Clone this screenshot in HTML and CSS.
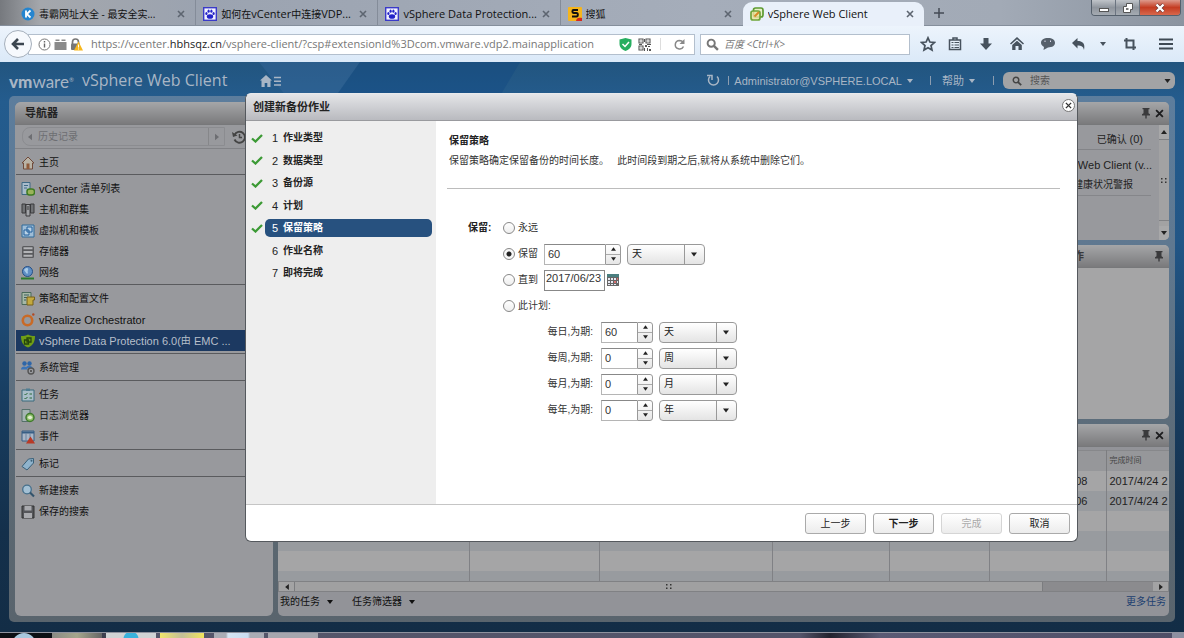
FILE: index.html
```html
<!DOCTYPE html>
<html lang="zh-CN">
<head>
<meta charset="utf-8">
<title>vSphere Web Client</title>
<link rel="stylesheet" href="styles.css">
</head>
<body>
<svg class="sprite" aria-hidden="true">
  <symbol id="x" viewBox="0 0 8 8"><path d="M1 1l6 6M7 1L1 7" stroke="currentColor" stroke-width="1.6" fill="none"/></symbol>
  <symbol id="down" viewBox="0 0 6 4"><path d="M0 0h6L3 4z" fill="currentColor"/></symbol>
  <symbol id="up" viewBox="0 0 6 4"><path d="M0 4h6L3 0z" fill="currentColor"/></symbol>
  <symbol id="left" viewBox="0 0 5 8"><path d="M5 0v8L0 4z" fill="currentColor"/></symbol>
  <symbol id="right" viewBox="0 0 5 8"><path d="M0 0v8l5-4z" fill="currentColor"/></symbol>
  <symbol id="grip" viewBox="0 0 6 5"><path d="M0 0h1.500v1.500H0zM4 0h1.500v1.500H4zM0 3.500h1.500V5H0zM4 3.500h1.500V5H4z" fill="#333"/></symbol>
  <symbol id="pin" viewBox="0 0 10 12"><path d="M1.500 1h7v1.300H7.500v4L9 7.200v1.300H5.700v3H4.300v-3H1V7.200l1.500-.9v-4h-1z" fill="currentColor"/></symbol>
  <symbol id="check" viewBox="0 0 12 9"><path d="M1 4.500l3.500 3L11 1" fill="none" stroke="#3c9a35" stroke-width="2.300"/></symbol>
  <symbol id="glass" viewBox="0 0 12 12"><circle cx="4.800" cy="4.800" r="3.300" fill="none" stroke="currentColor" stroke-width="1.800"/><path d="M7.300 7.300l3.700 3.700" stroke="currentColor" stroke-width="2.200"/></symbol>
  <symbol id="paw" viewBox="0 0 14 14"><rect x=".7" y=".7" width="12.600" height="12.600" fill="#f2f2ff" stroke="#3a3ac8" stroke-width="1.400"/><ellipse cx="7" cy="9.500" rx="3.200" ry="2.300" fill="#2323c8"/><ellipse cx="3.400" cy="6.500" rx="1.100" ry="1.500" fill="#2323c8"/><ellipse cx="5.600" cy="4.200" rx="1.100" ry="1.600" fill="#2323c8"/><ellipse cx="8.400" cy="4.200" rx="1.100" ry="1.600" fill="#2323c8"/><ellipse cx="10.600" cy="6.500" rx="1.100" ry="1.500" fill="#2323c8"/></symbol>
</svg>

<div class="tabstrip">
  <div class="tabs">
    <div class="tab"><svg class="fav" viewBox="0 0 14 14"><circle cx="7" cy="7" r="6.500" fill="#2585cf"/><path d="M5 3.500v7M9.500 3.500L5.800 7l3.700 3.500" stroke="#fff" stroke-width="1.800" fill="none"/></svg><span class="tab-title">毒霸网址大全 - 最安全实...</span><button class="tab-x" aria-label="关闭"><svg><use href="#x"/></svg></button></div>
    <div class="tab"><svg class="fav"><use href="#paw"/></svg><span class="tab-title">如何在<span class="la">vCenter</span>中连接<span class="la">VDP...</span></span><button class="tab-x" aria-label="关闭"><svg><use href="#x"/></svg></button></div>
    <div class="tab"><svg class="fav"><use href="#paw"/></svg><span class="tab-title la">vSphere Data Protection...</span><button class="tab-x" aria-label="关闭"><svg><use href="#x"/></svg></button></div>
    <div class="tab plain"><svg class="fav" viewBox="0 0 14 14"><rect width="14" height="14" rx="1" fill="#f6b51c"/><path d="M10 3H5.500C4 3 4 6 5.500 6h3c1.800 0 1.800 3.500 0 3.500H4" stroke="#111" stroke-width="1.900" fill="none"/><path d="M8 14c0-3 3-4 6-3v3z" fill="#d5281c"/></svg><span class="tab-title">搜狐</span><button class="tab-x" aria-label="关闭"><svg><use href="#x"/></svg></button></div>
    <div class="tab active"><svg class="fav" viewBox="0 0 14 14"><rect x="3.500" y="1" width="9.500" height="9" rx="2" fill="#e8f0c8" stroke="#5c9a30" stroke-width="1.700"/><rect x="1" y="4" width="9" height="9" rx="2" fill="#efe2a0" fill-opacity=".8" stroke="#6fa53a" stroke-width="1.700"/><path d="M4.500 9.500L9 5" stroke="#d78a28" stroke-width="2"/></svg><span class="tab-title la">vSphere Web Client</span><button class="tab-x" aria-label="关闭"><svg><use href="#x"/></svg></button></div>
  </div>
  <button class="newtab" aria-label="新标签页"><svg viewBox="0 0 10 10"><path d="M5 0v10M0 5h10" stroke="#444b55" stroke-width="1.500"/></svg></button>
  <div class="winbtns">
    <button aria-label="最小化"><svg viewBox="0 0 12 10"><rect x="1.500" y="5.500" width="9" height="3" fill="#fff" stroke="#555"/></svg></button>
    <button aria-label="还原"><svg viewBox="0 0 12 10"><path d="M4.500.5h6v6h-2v3h-7v-6h3z" fill="#fff" stroke="#555"/><rect x="4" y="5" width="2.500" height="2" fill="#777"/></svg></button>
    <button class="win-close" aria-label="关闭"><svg viewBox="0 0 12 10"><path d="M2.500 1.500l7 7M9.500 1.500l-7 7" stroke="#633" stroke-width="3.600"/><path d="M2.500 1.500l7 7M9.500 1.500l-7 7" stroke="#fff" stroke-width="2.400"/></svg></button>
  </div>
</div>

<div class="toolbar">
  <button class="back" aria-label="后退"><svg viewBox="0 0 14 12"><path d="M7 1L2 6l5 5M2.500 6H13" fill="none" stroke="#3c4650" stroke-width="2.600"/></svg></button>
  <div class="urlbar">
    <svg class="i13" viewBox="0 0 13 13"><circle cx="6.500" cy="6.500" r="5.500" fill="none" stroke="#777"/><path d="M6.500 5.500v4M6.500 3v1.500" stroke="#666" stroke-width="1.400"/></svg>
    <svg class="i13" viewBox="0 0 13 13"><path d="M.5 4h12v8H.5zM1.500 1.500h4v1.500h-4zM7.500 1.500h4v1.500h-4z" fill="#8a8a8a"/></svg>
    <svg class="i13 lock" viewBox="0 0 13 13"><path d="M2.500 6V4a3 3 0 016 0v2" fill="none" stroke="#777" stroke-width="1.700"/><rect x="1" y="5.500" width="9" height="6.500" rx="1" fill="#777"/><path d="M8.500 3.500L13 12.500H4z" fill="#f7b71d"/><path d="M8.500 6.500v3M8.500 10.500v1" stroke="#fff"/></svg>
    <div class="url la" role="textbox" aria-label="地址">https://vcenter.<b>hbhsqz.cn</b>/vsphere-client/?csp#extensionId%3Dcom.vmware.vdp2.mainapplication</div>
    <svg class="i13" viewBox="0 0 13 13"><path d="M6.500 0L12.500 1.500V6c0 3.500-3 6-6 7-3-1-6-3.500-6-7V1.500z" fill="#27ae60"/><path d="M3.500 6l2.500 2.500L10 4" fill="none" stroke="#fff" stroke-width="1.500"/></svg>
    <svg class="i13" viewBox="0 0 13 13"><path d="M1 1h4v4H1zM8 1h4v4H8zM1 8h4v4H1z" fill="none" stroke="#555" stroke-width="1.100"/><path d="M7 7h2v2H7zM10 8h2v1h-2zM9 10h1v3H9zM11 11h2v2h-2zM6 1h1v3H6zM6 10h1v3H6zM1 6h3v1H1zM9 6h4v1H9zM2.500 2.500h1v1h-1zM9.500 2.500h1v1h-1zM2.500 9.500h1v1h-1z" fill="#555"/></svg>
    <i class="vline"></i>
    <svg class="i13" viewBox="0 0 13 13"><path d="M10.500 8.500A4.300 4.300 0 116.500 2.400c1.800 0 3 .8 4 2" fill="none" stroke="#888" stroke-width="1.500"/><path d="M11.500 1v5h-5z" fill="#888"/></svg>
  </div>
  <label class="websearch"><svg class="i13 gray"><use href="#glass"/></svg><input type="text" placeholder="百度 &lt;Ctrl+K&gt;" aria-label="搜索"></label>
  <div class="tools">
    <button aria-label="书签"><svg viewBox="0 0 16 16"><path d="M8 1.800l1.900 4.200 4.500.5-3.400 3 1 4.500L8 11.700 4 14l1-4.500-3.400-3L6.100 6z" fill="none" stroke="#47525d" stroke-width="1.700"/></svg></button>
    <button aria-label="列表"><svg viewBox="0 0 16 16"><path d="M2.500 4h11v9.500h-11zM6 4V2h4v2" fill="none" stroke="#47525d" stroke-width="1.500"/><path d="M4.500 6.500h2M7.500 6.500h4.500M4.500 9h2M7.500 9h4.500M4.500 11.500h2M7.500 11.500h4.500" stroke="#47525d" stroke-width="1.200"/></svg></button>
    <button aria-label="下载"><svg viewBox="0 0 16 16"><path d="M5.500 2h5v5.500H14l-6 6.500-6-6.500h3.500z" fill="#47525d"/></svg></button>
    <button aria-label="主页"><svg viewBox="0 0 16 16"><path d="M8 1l7 6.500-1 1L8 3.200 2 8.500l-1-1z" fill="#47525d"/><path d="M3.200 9L8 4.800 12.800 9v5H9.500v-4h-3v4H3.200z" fill="#47525d"/></svg></button>
    <button aria-label="消息"><svg viewBox="0 0 16 16"><path d="M8 2c4.200 0 7 2 7 4.800S12.500 11.500 8 11.500L3.500 14l.5-3C2 10 1 8.500 1 6.800 1 4 3.800 2 8 2z" fill="#56606b"/><path d="M5 4.500v1.500M10.500 4.500V6" stroke="#dde"/></svg></button>
    <button aria-label="撤销"><svg viewBox="0 0 16 16"><path d="M6.500 2v3c5 0 8 2.500 6.500 9-.8-3.500-2.500-4.500-6.500-4.500v3L1 7z" fill="#47525d"/></svg></button>
    <button class="mini" aria-label="更多"><svg><use href="#down"/></svg></button>
    <button aria-label="截图"><svg viewBox="0 0 16 16"><path d="M4.500 2v9.500H14M2 4.500h9.500V14" fill="none" stroke="#47525d" stroke-width="2"/></svg></button>
    <button aria-label="菜单"><svg viewBox="0 0 16 16"><path d="M1 3.500h14M1 8h14M1 12.500h14" stroke="#3f4a55" stroke-width="2.200"/></svg></button>
  </div>
</div>

<main class="app">
  <header class="apphead">
    <svg class="facets" viewBox="0 0 400 34" preserveAspectRatio="none"><path d="M50 0L77 34h50L151 0z" fill="#38689b" opacity=".45"/><path d="M151 0L127 34h164l20-34z" fill="#0d4480" opacity=".35"/></svg>
    <span class="brand"><b>vm</b>ware<sup>®</sup></span><span class="product">vSphere Web Client</span>
    <button class="homebtn" aria-label="主页"><svg viewBox="0 0 22 12"><path d="M6 0l6 5.500h-1.500V12H7.300V8H4.700v4H1.500V5.500H0z" fill="currentColor"/><path d="M14 2.500h7M14 6.300h7M14 10h7" stroke="currentColor" stroke-width="1.600"/></svg></button>
    <div class="headright">
      <svg class="i13" viewBox="0 0 13 13"><path d="M3 2.500a5 5 0 107 0" fill="none" stroke="currentColor" stroke-width="1.500"/><path d="M0 1.500h5v4.500" fill="none" stroke="currentColor" stroke-width="1.500"/></svg>
      <i class="bar"></i>
      <button class="menu user">Administrator@VSPHERE.LOCAL<svg><use href="#down"/></svg></button>
      <i class="bar"></i>
      <button class="menu help">帮助<svg><use href="#down"/></svg></button>
      <i class="bar"></i>
      <label class="find"><svg class="glass"><use href="#glass"/></svg><input type="text" placeholder="搜索" aria-label="搜索"><svg class="car"><use href="#down"/></svg></label>
    </div>
  </header>

  <div class="workspace">
    <nav class="side">
      <h2 class="ptitle">导航器</h2>
      <div class="history"><div class="histbox"><svg><use href="#left"/></svg><span>历史记录</span><i></i><svg><use href="#right"/></svg></div><svg class="clock" viewBox="0 0 14 14"><path d="M2.500 5A5.500 5.500 0 112.500 9.500" fill="none" stroke="#444" stroke-width="1.900"/><path d="M0 2l1 5 4.500-1.500z" fill="#444"/><path d="M7.500 4v3.500H10" fill="none" stroke="#444" stroke-width="1.500"/></svg></div>
      <ul class="tight">
        <li><svg viewBox="0 0 14 14"><path d="M7 1l6 6h-1.500v6h-9V7H1z" fill="#b9b3a6" stroke="#6f4a3a"/><rect x="5.500" y="7.500" width="3" height="5.500" fill="#8f5a3a"/></svg>主页</li>
      </ul>
      <ul class="tight">
        <li><svg viewBox="0 0 14 14"><path d="M1 .5h8v12H1z" fill="#a9bccb" stroke="#3f6a85"/><path d="M3 3.500h4M3 6h3" stroke="#3f6a85"/><rect x="6" y="7" width="7.500" height="6" rx="2.500" fill="#9ab35a" stroke="#3e7a22" stroke-width="1.500"/></svg><span class="en">vCenter</span> 清单列表</li>
        <li><svg viewBox="0 0 14 14"><path d="M1 1h3.500v9H1zM9.500 1H13v9H9.500z" fill="#707275" stroke="#3a3a3c"/><path d="M5 1.500h4V13H5z" fill="#a2a4a8" stroke="#3a3a3c"/><path d="M6 4h2M6 6h2" stroke="#333"/></svg>主机和群集</li>
        <li><svg viewBox="0 0 14 14"><path d="M1 1h12v12H1z" fill="#9fbdd6" stroke="#2f6a9a"/><path d="M3 6h5v5H3zM6 3h5v5H6z" fill="#b9d2e6" stroke="#215f9b"/></svg>虚拟机和模板</li>
        <li><svg viewBox="0 0 14 14"><rect x="1" y="1" width="12" height="12" rx="1.500" fill="#5a5b5e"/><path d="M2.500 3.200h9M2.500 7h9M2.500 10.800h9" stroke="#b3b4b7" stroke-width="2"/></svg>存储器</li>
        <li><svg viewBox="0 0 14 14"><circle cx="6.500" cy="5.500" r="5" fill="#5f8fc4" stroke="#244f86"/><path d="M3 4c2-3 5-2 4 0s1 3-1 4z" fill="#a9cbe8"/><path d="M0 12.500h13" stroke="#2c7a2c" stroke-width="2"/></svg>网络</li>
      </ul>
      <ul>
        <li><svg viewBox="0 0 14 14"><path d="M1 .5h9v12H1z" fill="#a6b8a6" stroke="#4a6a5a"/><path d="M3 3h5M3 5.500h3M3 8h2" stroke="#3f5f5f"/><path d="M6 5h7.500v3H12v5H6z" fill="#c3a93f" stroke="#77601a"/></svg>策略和配置文件</li>
        <li class="en"><svg viewBox="0 0 14 14"><circle cx="6.500" cy="7.500" r="4.700" fill="none" stroke="#c96a26" stroke-width="2.600"/><circle cx="12.300" cy="1.500" r="1.200" fill="#b24a26"/></svg>vRealize Orchestrator</li>
        <li class="sel en"><svg viewBox="0 0 14 14"><path d="M0 2c3 0 5-.5 7-1.500C9 1.500 11 2 14 2c0 6-2 9.500-7 11.500C2 11.500 0 8 0 2z" fill="#6f9d16"/><path d="M3.500 6h4v4h-4zM6 4h4v4H6z" fill="none" stroke="#25440c" stroke-width="1.300"/></svg>vSphere Data Protection 6.0(<span class="zh">由</span> EMC ...</li>
      </ul>
      <ul>
        <li><svg viewBox="0 0 14 14"><circle cx="3.500" cy="2.500" r="2.200" fill="#2e66a8"/><circle cx="8.500" cy="2.500" r="2.200" fill="#2e66a8"/><path d="M0 8.500c0-4 6-4 7 0zM5 7c0-3 6-3 6.500 0z" fill="#3a74b8"/><circle cx="10" cy="10" r="3" fill="#9a9ca0" stroke="#555" stroke-width="1.400"/><circle cx="10" cy="10" r="1" fill="#444"/></svg>系统管理</li>
      </ul>
      <ul>
        <li><svg viewBox="0 0 14 14"><path d="M1 2h12v11H1z" fill="#a9bec9" stroke="#3a6a7c"/><path d="M5 .5h4V3H5z" fill="#4f7d92"/><path d="M3.500 6l1 1 2-2M3.500 10l1 1 2-2M8.500 6H11M8.500 10H11" fill="none" stroke="#2a6a3a"/></svg>任务</li>
        <li><svg viewBox="0 0 14 14"><path d="M1 .5h8v12H1z" fill="#a6b5b5" stroke="#55706a"/><circle cx="9" cy="8.500" r="4" fill="#8fbf6a" stroke="#3e7a2c" stroke-width="1.500"/><path d="M6.500 8.500c1.500-2.200 3.500-2.200 5 0-1.500 2.200-3.500 2.200-5 0z" fill="#dfeed0"/></svg>日志浏览器</li>
        <li><svg viewBox="0 0 14 14"><path d="M1 1h12v10H1z" fill="#a9b6c6" stroke="#385f85"/><path d="M1 2.500h12" stroke="#385f85" stroke-width="2"/><path d="M5 3v8M9 3v8" stroke="#6a84a0"/><path d="M9.500 6.500L14 13.500H5z" fill="#b83a26"/></svg>事件</li>
      </ul>
      <ul>
        <li><svg viewBox="0 0 14 14"><path d="M1 9.500L7.500 2l5-.5V6L6 13z" fill="#8fb3cc" stroke="#3a6078"/><circle cx="10.500" cy="3.700" r="1" fill="#3a6078"/></svg>标记</li>
      </ul>
      <ul class="last">
        <li><svg viewBox="0 0 14 14"><circle cx="6" cy="5.500" r="4.300" fill="#a3c0d4" stroke="#46708c" stroke-width="1.300"/><path d="M9 8.500l4 4" stroke="#33546c" stroke-width="2.200"/></svg>新建搜索</li>
        <li><svg viewBox="0 0 14 14"><path d="M1 1h12v12H1z" fill="#55565a" stroke="#333"/><path d="M3.500 1h7v4.500h-7zM3 8h8v5H3z" fill="#a9aaae"/></svg>保存的搜索</li>
      </ul>
    </nav>

    <div class="cols">
      <section class="panel alerts">
        <div class="ptitle tools2"><svg><use href="#pin"/></svg><svg class="px"><use href="#x"/></svg></div>
        <div class="alertbody">
          <div class="alertlist"><p class="ack">已确认 <span class="en">(0)</span></p><p class="en a1">vSphere Web Client (v...</p><p class="a2">健康状况警报</p></div>
          <div class="vscroll"><button aria-label="上"><svg><use href="#up"/></svg></button><div class="vthumb"><svg><use href="#grip"/></svg></div><button aria-label="下"><svg><use href="#down"/></svg></button></div>
        </div>
      </section>
      <section class="panel work">
        <div class="ptitle tools2"><span class="worktitle">正在进行的工作</span><svg><use href="#pin"/></svg></div>
      </section>
      <section class="panel tasks">
        <div class="ptitle tools2"><svg><use href="#pin"/></svg><svg class="px"><use href="#x"/></svg></div>
        <div class="tablebox">
          <table>
            <colgroup><col class="c1"><col class="c2"><col class="c3"><col class="c4"><col class="c5"><col class="c4"><col></colgroup>
            <thead><tr><th></th><th></th><th></th><th></th><th></th><th></th><th>完成时间</th></tr></thead>
            <tbody>
              <tr><td></td><td></td><td></td><td></td><td></td><td class="ms">08</td><td>2017/4/24 2</td></tr>
              <tr><td></td><td></td><td></td><td></td><td></td><td class="ms">06</td><td>2017/4/24 2</td></tr>
              <tr><td></td><td></td><td></td><td></td><td></td><td></td><td></td></tr>
              <tr><td></td><td></td><td></td><td></td><td></td><td></td><td></td></tr>
              <tr><td></td><td></td><td></td><td></td><td></td><td></td><td></td></tr>
              <tr><td></td><td></td><td></td><td></td><td></td><td></td><td></td></tr>
            </tbody>
          </table>
        </div>
        <div class="hscroll"><button aria-label="左"><svg><use href="#left"/></svg></button><div class="hthumb"><svg><use href="#grip"/></svg></div><div class="htrack"></div><button aria-label="右"><svg><use href="#right"/></svg></button></div>
        <div class="taskfoot"><button>我的任务<svg><use href="#down"/></svg></button><button>任务筛选器<svg><use href="#down"/></svg></button><a href="#">更多任务</a></div>
      </section>
    </div>
  </div>
</main>

<div class="dialog" role="dialog" aria-label="创建新备份作业">
  <div class="dhead"><h1>创建新备份作业</h1><button aria-label="关闭"><svg><use href="#x"/></svg></button></div>
  <div class="dmain">
    <ol class="steps">
      <li><svg><use href="#check"/></svg><span><i>1</i>作业类型</span></li>
      <li><svg><use href="#check"/></svg><span><i>2</i>数据类型</span></li>
      <li><svg><use href="#check"/></svg><span><i>3</i>备份源</span></li>
      <li><svg><use href="#check"/></svg><span><i>4</i>计划</span></li>
      <li class="cur"><svg><use href="#check"/></svg><span><i>5</i>保留策略</span></li>
      <li><svg></svg><span><i>6</i>作业名称</span></li>
      <li><svg></svg><span><i>7</i>即将完成</span></li>
    </ol>
    <div class="dbody">
      <div class="intro"><h2>保留策略</h2><p>保留策略确定保留备份的时间长度。 &nbsp;&nbsp;此时间段到期之后,就将从系统中删除它们。</p></div>
      <form class="form">
        <b class="flabel">保留:</b>
        <div class="rows">
          <div class="row"><label><input type="radio" name="keep">永远</label></div>
          <div class="row"><label><input type="radio" name="keep" checked>保留</label>
            <div class="spin wide"><input type="text" value="60" aria-label="保留时长"><div><button type="button" aria-label="增加"><svg><use href="#up"/></svg></button><button type="button" aria-label="减少"><svg><use href="#down"/></svg></button></div></div>
            <div class="pick"><select aria-label="保留单位"><option>天</option></select><svg><use href="#down"/></svg></div></div>
          <div class="row"><label><input type="radio" name="keep">直到</label><input class="date" type="text" value="2017/06/23" aria-label="日期">
            <svg class="cal" viewBox="0 0 12 12"><path d="M0 0h12v12H0z" fill="#666"/><path d="M0 0h12v3H0z" fill="#4a7f80"/><path d="M1 4h2v2H1zM4 4h2v2H4zM7 4h2v2H7zM1 7h2v2H1zM4 7h2v2H4zM1 10h2v1H1zM4 10h2v1H4zM7 10h2v1H7zM10 7h1v2h-1z" fill="#e8eaf4"/><path d="M10 4h1v2h-1zM7 7h2v2H7z" fill="#d97070"/></svg></div>
          <div class="row"><label><input type="radio" name="keep">此计划:</label></div>
          <div class="row sub"><label for="d">每日,为期:</label><div class="spin"><input id="d" type="text" value="60"><div><button type="button" aria-label="增加"><svg><use href="#up"/></svg></button><button type="button" aria-label="减少"><svg><use href="#down"/></svg></button></div></div><div class="pick"><select aria-label="每日单位"><option>天</option></select><svg><use href="#down"/></svg></div></div>
          <div class="row sub"><label for="w">每周,为期:</label><div class="spin"><input id="w" type="text" value="0"><div><button type="button" aria-label="增加"><svg><use href="#up"/></svg></button><button type="button" aria-label="减少"><svg><use href="#down"/></svg></button></div></div><div class="pick"><select aria-label="每周单位"><option>周</option></select><svg><use href="#down"/></svg></div></div>
          <div class="row sub"><label for="m">每月,为期:</label><div class="spin"><input id="m" type="text" value="0"><div><button type="button" aria-label="增加"><svg><use href="#up"/></svg></button><button type="button" aria-label="减少"><svg><use href="#down"/></svg></button></div></div><div class="pick"><select aria-label="每月单位"><option>月</option></select><svg><use href="#down"/></svg></div></div>
          <div class="row sub"><label for="y">每年,为期:</label><div class="spin"><input id="y" type="text" value="0"><div><button type="button" aria-label="增加"><svg><use href="#up"/></svg></button><button type="button" aria-label="减少"><svg><use href="#down"/></svg></button></div></div><div class="pick"><select aria-label="每年单位"><option>年</option></select><svg><use href="#down"/></svg></div></div>
        </div>
      </form>
    </div>
  </div>
  <div class="dfoot"><button>上一步</button><button class="strong">下一步</button><button disabled>完成</button><button>取消</button></div>
</div>

<footer class="taskbar"><div class="orb"></div><div class="tb t1"></div><div class="tb t2"></div><div class="tb t3"></div><div class="tb t4"></div><div class="tb t5"></div><div class="desk"></div></footer>
</body>
</html>
```
FILE: styles.css
```css
* { box-sizing: border-box; margin: 0; padding: 0; }
body {
  position: relative;
  display: flex;
  flex-direction: column;
  min-height: 100vh;
  overflow: hidden;
  background: #15304a;
  color: #111;
  font: 10px/14px "Liberation Sans", "Noto Sans CJK SC", sans-serif;
}
button { border: 0; background: none; color: inherit; font: inherit; }
input, select { font: inherit; color: inherit; min-width: 0; }
ul, ol { list-style: none; }
i { font-style: normal; }
svg { display: block; flex: none; }
.sprite { position: absolute; width: 0; height: 0; }
.en { font-size: 11px; }
.zh { font-size: 10px; }
.la { font-size: 11px; }
.i13 { width: 13px; height: 13px; }

/* browser tabs */
.tabstrip {
  display: flex;
  height: 26px;
  padding-left: 14px;
  background: linear-gradient(90deg, #76797e 0, #a4a7ac 40px, #9ba3b0 200px, #a5adba 700px, #a2aab6 1000px, #8b94a0);
  border-bottom: 1px solid #858f9c;
  font-family: "Open Sans", "Noto Sans CJK SC", sans-serif;
}
.tabs { display: flex; width: 910px; }
.tab {
  display: flex;
  flex: 1;
  align-items: center;
  gap: 4px;
  padding: 2px 10px 0 7px;
  border-right: 1px solid #848c99;
}
.tab.plain { border-right-color: transparent; }
.tab.active {
  height: 24px;
  margin-top: 2px;
  padding-top: 0;
  background: #e9f0fa;
  border: 0;
  border-radius: 9px 9px 0 0;
}
.fav { width: 14px; height: 14px; }
.tab-title { flex: 1; white-space: nowrap; overflow: hidden; }
.tab-x { color: #5d6570; }
.tab-x svg { width: 8px; height: 8px; }
.newtab { padding: 1px 10px 0; }
.newtab svg { width: 10px; height: 10px; }
.winbtns {
  display: flex;
  height: 16px;
  margin: 0 3px 0 auto;
  border: 1px solid #55606c;
  border-top: 0;
  border-radius: 0 0 4px 4px;
  overflow: hidden;
}
.winbtns button {
  display: grid;
  place-items: center;
  width: 24px;
  border-right: 1px solid #6b7480;
  background: linear-gradient(#c0c4c9, #8f959d 50%, #a5abb2);
}
.winbtns .win-close { width: 40px; border: 0; background: linear-gradient(#dd9a8c, #c43c22 50%, #d8684c); }
.winbtns svg { width: 12px; height: 10px; }

/* navigation toolbar */
.toolbar {
  display: flex;
  align-items: center;
  height: 36px;
  padding: 0 10px 0 4px;
  background: linear-gradient(#edf4fc, #dbe9f8);
  font-family: "Open Sans", "Noto Sans CJK SC", sans-serif;
}
.back {
  z-index: 1;
  display: grid;
  place-items: center;
  width: 28px;
  height: 28px;
  border: 1px solid #a5afbb;
  border-radius: 50%;
  background: #f6f9fd;
}
.back svg { width: 14px; height: 12px; }
.urlbar {
  display: flex;
  flex: 1;
  align-items: center;
  gap: 3px;
  height: 21px;
  min-width: 0;
  margin-left: -4px;
  padding: 0 8px 0 9px;
  border: 1px solid #b3bfcd;
  background: #fff;
}
.url { flex: 1; margin-left: 5px; color: #777; white-space: nowrap; overflow: hidden; }
.url b { color: #222; font-weight: 400; }
.urlbar .i13:nth-of-type(n+5) { margin-left: 3px; }
.vline { width: 1px; height: 12px; margin: 0 6px; background: #ddd; }
.websearch {
  display: flex;
  align-items: center;
  gap: 5px;
  width: 210px;
  height: 21px;
  margin-left: 5px;
  padding: 0 5px;
  border: 1px solid #b3bfcd;
  background: #fff;
}
.websearch input { flex: 1; border: 0; outline: 0; font-style: italic; }
.websearch input::placeholder { color: #777; }
.gray { color: #777; }
.tools { display: flex; align-items: center; gap: 15px; margin-left: 10px; color: #47525d; }
.tools svg { width: 16px; height: 16px; }
.tools button:first-child { margin-right: -4px; }
.tools .mini { margin: 0 1px 0 -2px; }
.tools .mini svg { width: 6px; height: 4px; }
.tools button:last-child { margin-left: 5px; }

/* application shell */
.app {
  display: flex;
  flex: 1;
  flex-direction: column;
  padding: 0 9px 10px;
  background: linear-gradient(#22557f 0, #245c8e 40px, #225686 180px, #183d60 340px, #14304b 470px, #132d46);
}
.apphead { position: relative; display: flex; align-items: center; height: 34px; padding-top: 3px; color: #a9b6c5; }
.facets { position: absolute; left: 200px; top: 0; width: 400px; height: 34px; }
.brand { font: 17px/20px Lato, sans-serif; }
.brand b { font-weight: 900; }
.brand sup { font-size: 6px; vertical-align: 6px; }
.product { margin: 0 0 2px 8px; font: 16px/20px "Open Sans", sans-serif; }
.homebtn { position: relative; margin-left: 33px; }
.homebtn svg { width: 22px; height: 12px; }
.headright { display: flex; align-items: center; margin-left: auto; font-size: 11px; }
.bar { width: 1px; height: 9px; background: #8c9db0; }
.headright .i13 { margin-right: 8px; }
.menu { display: flex; align-items: center; gap: 5px; }
.menu svg { width: 6px; height: 4px; }
.user { margin: 0 17px 0 5px; }
.help { margin: 0 18px 0 11px; }
.find {
  display: flex;
  align-items: center;
  width: 172px;
  height: 17px;
  margin-left: 9px;
  padding: 0 4px 0 9px;
  border-radius: 6px;
  background: #a2a3a5;
  color: #222;
}
.find input { flex: 1; border: 0; outline: 0; background: none; margin-left: 8px; font-size: 10px; }
.find input::placeholder { color: #555; }
.find .glass { width: 10px; height: 10px; color: #444; }
.find .car { width: 7px; height: 4px; }

.workspace {
  display: flex;
  flex: 1;
  gap: 5px;
  padding: 6px;
  border-radius: 5px;
  background: linear-gradient(#5c7d9d, #5f7890 150px, #5b6872 400px, #59646d);
}
.side { width: 258px; border-radius: 6px; background: #98999d; overflow: hidden; }
.ptitle {
  display: flex;
  align-items: center;
  height: 23px;
  padding-left: 10px;
  background: linear-gradient(#a5a6a8, #7a7a7c);
  border-bottom: 1px solid #77787a;
  font-size: 11px;
  font-weight: 700;
  color: #222;
}
.history { display: flex; align-items: center; height: 24px; padding-left: 7px; border-bottom: 1px solid #818286; gap: 7px; }
.histbox { display: flex; align-items: center; gap: 6px; width: 203px; height: 19px; padding: 0 5px; border: 1px solid #8b8c90; border-radius: 8px 0 0 8px; color: #6d6e72; }
.histbox span { flex: 1; }
.histbox i { width: 1px; height: 17px; background: #86878a; }
.histbox svg { width: 4px; height: 8px; }
.clock { width: 14px; height: 14px; }
.side ul { margin-left: 1px; padding: 3px 0 2px; border-bottom: 1px solid #5a5b5e; }
.side ul.tight { padding-bottom: 1px; }
.side ul.last { border: 0; }
.side li { display: flex; align-items: center; height: 21px; padding-left: 5px; color: #111; white-space: pre; }
.side li svg { width: 14px; height: 14px; margin-right: 4px; }
.side li.sel { background: #1c3961; color: #b7bfca; }

.cols { display: flex; flex: 1; flex-direction: column; gap: 5px; min-width: 0; }
.panel { display: flex; flex-direction: column; border-radius: 5px; background: #a5a5a6; overflow: hidden; }
.tools2 { justify-content: flex-end; gap: 4px; padding-right: 5px; color: #3a3a3c; }
.tools2 svg { width: 10px; height: 12px; }
.tools2 .px { width: 9px; height: 9px; color: #1c1c1e; }
.alerts { height: 138px; background: #98999d; }
.alertbody { display: flex; flex: 1; min-height: 0; }
.alertlist { flex: 1; text-align: right; color: #222; }
.ack { height: 25px; margin-right: 8px; padding: 7px 8px 0 0; border-bottom: 1px solid #838488; }
.a1 { padding: 8px 7px 0 0; }
.a2 { margin: 4px 8px 0 0; padding: 2px 18px 3px 0; border-bottom: 1px solid #85868a; }
.vscroll { display: flex; flex-direction: column; width: 10px; background: #a2a2a3; }
.vscroll button { display: grid; place-items: center; height: 14px; background: #a8a8a9; }
.vscroll svg { width: 6px; height: 4px; color: #222; }
.vthumb { display: grid; place-items: center; flex: 1; margin-bottom: 5px; border: 1px solid #808184; border-width: 1px 0; }
.vthumb svg, .hthumb svg { width: 6px; height: 5px; }
.work { height: 174px; }
.worktitle { margin-right: 66px; }
.tasks { flex: 1; background: #929398; }
.tablebox { flex: 1 1 0; min-height: 0; padding-top: 3px; overflow: hidden; }
table { width: 100%; border-collapse: collapse; table-layout: fixed; }
.c1 { width: 191px; } .c2 { width: 130px; } .c3 { width: 173px; } .c4 { width: 117px; } .c5 { width: 100px; }
th { height: 20px; padding-left: 3px; text-align: left; font-size: 8px; font-weight: 400; background: #96979a; border-right: 1px solid #7c7d80; border-top: 1px solid #87888b; color: #444; }
td { height: 20px; padding-left: 3px; font-size: 11px; color: #222; white-space: nowrap; border-right: 1px solid #808185; background: #a5a5a6; }
th:last-child, td:last-child { border-right: 0; }
tr:nth-child(even) td { background: #989b9f; }
td.ms { padding-right: 18px; text-align: right; }
.hscroll { display: flex; height: 11px; background: #8b8b8e; border: 1px solid #808184; }
.hscroll button { display: grid; place-items: center; width: 15px; background: #a3a3a4; }
.hscroll button svg { width: 4px; height: 6px; color: #222; }
.hthumb { flex: 750; display: grid; place-items: center; background: #a0a0a1; border: 1px solid #7b7c7f; border-width: 0 1px; }
.htrack { flex: 110; }
.taskfoot { display: flex; gap: 19px; height: 24px; padding: 3px 3px 7px 2px; color: #111; }
.taskfoot button { display: flex; align-items: center; gap: 7px; }
.taskfoot svg { width: 6px; height: 4px; }
.taskfoot a { margin-left: auto; color: #1d3f70; text-decoration: none; }

/* wizard */
.dialog {
  position: absolute;
  left: 245px;
  right: 106px;
  top: 93px;
  border: 1px solid #55595e;
  border-top-color: #e8e9ec;
  border-radius: 6px;
  background: #fff;
  color: #333;
  overflow: hidden;
}
.dhead { display: flex; align-items: center; justify-content: space-between; height: 27px; padding: 0 2px 0 7px; background: linear-gradient(#e4e5e8, #b9babf); border-bottom: 1px solid #999a9e; }
.dhead h1 { font-size: 11px; font-weight: 700; color: #222; }
.dhead button { display: grid; place-items: center; width: 13px; height: 13px; border: 1px solid #777; border-radius: 50%; background: #fff; margin-bottom: 3px; }
.dhead svg { width: 7px; height: 7px; }
.dmain { display: flex; min-height: 384px; border-bottom: 1px solid #c5c5c5; background: linear-gradient(90deg, #eee 190px, #fff 190px); }
.steps { display: flex; flex-direction: column; justify-content: space-between; width: 190px; height: 169px; padding: 8px 4px 8px 5px; }
.steps li { display: flex; align-items: center; gap: 2px; }
.steps svg { width: 12px; height: 9px; }
.steps span { display: flex; flex: 1; align-items: center; height: 18px; padding-left: 7px; border-radius: 5px; font-weight: 700; color: #222; }
.steps i { width: 11px; font-size: 11px; font-weight: 400; }
.steps .cur span { background: #27517f; color: #fff; }
.dbody { flex: 1; padding: 12px 17px 0 11px; }
.intro { height: 56px; padding-left: 2px; border-bottom: 1px solid #bcbcbc; }
.intro h2 { font-size: 10px; line-height: 16px; color: #222; }
.intro p { margin-top: 4px; line-height: 16px; }
.form { display: flex; padding: 26px 0 0 21px; }
.flabel { width: 35px; line-height: 26px; color: #222; }
.rows { flex: 1; }
.row { display: flex; align-items: center; height: 26px; }
.row label { display: flex; align-items: center; gap: 3px; }
.row input[type=radio] { appearance: none; width: 12px; height: 12px; border: 1px solid #888; border-radius: 50%; background: linear-gradient(#fff, #eee); }
.row input[type=radio]:checked { background: radial-gradient(circle, #222 2px, #f8f8f8 3px); }
.spin { display: flex; width: 52px; height: 21px; }
.spin.wide { width: 77px; margin-left: 6px; }
.spin > input { flex: 1; width: 0; padding: 0 3px; border: 1px solid #b5b5b5; border-top-color: #888; border-right: 0; font-size: 11px; outline: 0; }
.spin > div { display: flex; flex-direction: column; width: 16px; border: 1px solid #999; border-radius: 0 3px 3px 0; background: linear-gradient(#fff, #e6e6e6); }
.spin button { display: grid; place-items: center; flex: 1; }
.spin button:first-child { border-bottom: 1px solid #aaa; }
.spin svg { width: 5px; height: 4px; color: #222; }
.pick { display: grid; align-items: center; width: 78px; height: 21px; margin-left: 6px; }
.pick select { grid-area: 1 / 1; appearance: none; width: 100%; height: 100%; padding-left: 4px; border: 1px solid #999; border-radius: 4px; color: #222; background: linear-gradient(90deg, transparent 56px, #999 56px, #999 57px, transparent 57px), linear-gradient(#fff, #e4e4e4); }
.pick svg { grid-area: 1 / 1; justify-self: end; width: 6px; height: 5px; margin-right: 8px; color: #222; pointer-events: none; }
.date { width: 61px; height: 21px; margin: 0 2px 0 6px; padding: 0 1px 4px; border: 1px solid #888; font-size: 11px; outline: 0; }
.cal { width: 12px; height: 12px; }
.row.sub > label { width: 90px; justify-content: flex-end; margin-right: 8px; }
.dfoot { display: flex; justify-content: flex-end; gap: 7px; padding: 8px 7px 7px; }
.dfoot button { width: 61px; height: 21px; border: 1px solid #aaa; border-radius: 3px; background: linear-gradient(#fff, #ececec); color: #222; }
.dfoot .strong { font-weight: 700; }
.dfoot button:disabled { color: #aaa; border-color: #d5d5d5; }

/* desktop taskbar */
.taskbar { display: flex; gap: 4px; height: 6px; border-top: 1px solid #8f929e; background: linear-gradient(90deg, #0c0f14 50px, #55566a 130px, #54546a 800px, #22222e 830px, #5a5a74 880px, #4e4e66); overflow: hidden; }
.orb { width: 24px; height: 24px; margin: 0 12px; border-radius: 50%; background: #a9c8de; }
.tb { width: 50px; background: #b9bbb8; }
.t1 { background: linear-gradient(90deg, #8a8a84, #a5a68c, #666); }
.t2 { background: radial-gradient(circle at 50% 6px, #39b2dc 7px, #d0d3d4 8px); }
.t3 { width: 44px; margin-right: 6px; background: linear-gradient(90deg, #f1e66c, #c2bf98, #f1e45c); }
.t4 { background: linear-gradient(90deg, #a9acb5 12px, #d5e4f2 14px, #c9dcf0 34px, #a9acb5 36px); }
.t5 { background: #a5a6ae; }
.desk { width: 12px; margin-left: auto; background: #8d8fa0; }
```
